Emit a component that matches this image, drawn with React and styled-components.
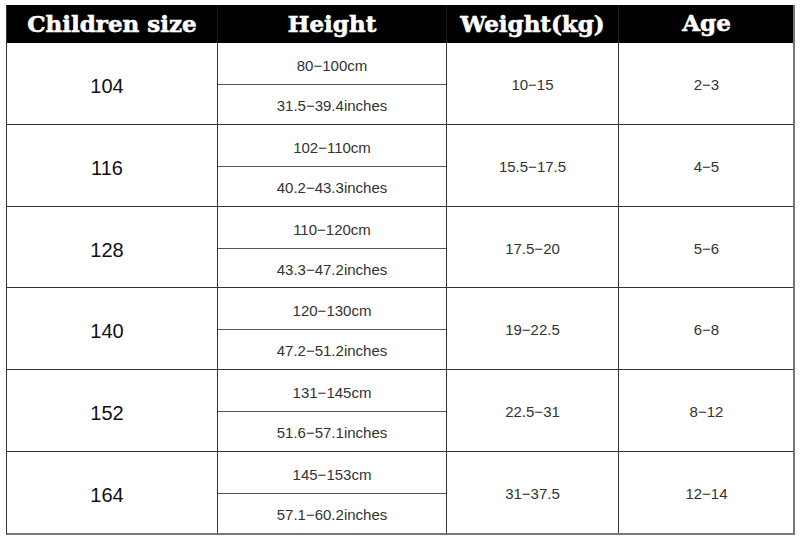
import React from "react";
import styled, { createGlobalStyle } from "styled-components";

const rows = [
  { size: "104", cm: "80−100cm", inch: "31.5−39.4inches", weight: "10−15", age: "2−3" },
  { size: "116", cm: "102−110cm", inch: "40.2−43.3inches", weight: "15.5−17.5", age: "4−5" },
  { size: "128", cm: "110−120cm", inch: "43.3−47.2inches", weight: "17.5−20", age: "5−6" },
  { size: "140", cm: "120−130cm", inch: "47.2−51.2inches", weight: "19−22.5", age: "6−8" },
  { size: "152", cm: "131−145cm", inch: "51.6−57.1inches", weight: "22.5−31", age: "8−12" },
  { size: "164", cm: "145−153cm", inch: "57.1−60.2inches", weight: "31−37.5", age: "12−14" },
];

export default function App() {
  return (
    <>
      <GlobalStyle />
      <Table>
        <HeaderRow>
          <HeadCell>Children size</HeadCell>
          <HeadCell>Height</HeadCell>
          <HeadCell>Weight(kg)</HeadCell>
          <HeadCell $raise>Age</HeadCell>
        </HeaderRow>
        {rows.map((r) => (
          <Row key={r.size}>
            <SizeCell>{r.size}</SizeCell>
            <HeightCell>
              <SubCell>{r.cm}</SubCell>
              <SubCell $last>{r.inch}</SubCell>
            </HeightCell>
            <Cell>{r.weight}</Cell>
            <Cell $last>{r.age}</Cell>
          </Row>
        ))}
      </Table>
    </>
  );
}

const GlobalStyle = createGlobalStyle`
  html, body {
    margin: 0;
    padding: 0;
    background: #fff;
  }
  body {
    font-family: "Liberation Sans", Arial, sans-serif;
  }
`;

const columns = "211px 229px 172px 175px";

const Table = styled.div`
  width: 789px;
  margin: 5px 0 0 6px;
  display: flex;
  flex-direction: column;
  height: 530px;
  border-left: 1px solid #333;
  border-right: 2px solid #777;
  border-bottom: 2px solid #777;
  box-sizing: border-box;
`;

const HeaderRow = styled.div`
  display: grid;
  grid-template-columns: ${columns};
  height: 38px;
  flex: none;
  background: #000;
`;

const HeadCell = styled.div`
  display: flex;
  align-items: center;
  justify-content: center;
  padding-bottom: ${(p) => (p.$raise ? "4px" : "1px")};
  color: #fff;
  font-family: "DejaVu Serif", serif;
  font-weight: 700;
  font-size: 23px;
  -webkit-text-stroke: 0.6px #fff;
  border-right: 1px solid #1c1c1c;
  &:last-child {
    border-right: none;
  }
`;

const Row = styled.div`
  display: grid;
  grid-template-columns: ${columns};
  flex: 1;
  border-bottom: 1px solid #333;
  &:last-child {
    border-bottom: none;
  }
`;

const Cell = styled.div`
  display: flex;
  align-items: center;
  justify-content: center;
  padding-top: 2px;
  font-size: 15px;
  color: #333;
  border-right: ${(p) => (p.$last ? "none" : "1px solid #333")};
`;

const SizeCell = styled(Cell)`
  font-size: 20px;
  color: #111;
  padding: 6px 10px 0 0;
`;

const HeightCell = styled.div`
  display: flex;
  flex-direction: column;
  border-right: 1px solid #333;
`;

const SubCell = styled.div`
  flex: 1;
  display: flex;
  align-items: center;
  justify-content: center;
  padding-top: ${(p) => (p.$last ? "2px" : "4px")};
  font-size: 15px;
  color: #333;
  border-bottom: ${(p) => (p.$last ? "none" : "1px solid #555")};
`;
